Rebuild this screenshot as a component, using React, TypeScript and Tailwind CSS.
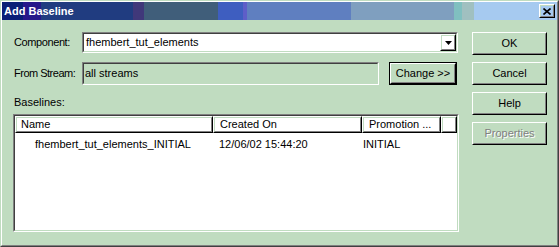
const FACE = "#c0dcc0";

// dithered caption gradient, as the 256-colour display draws it
const captionBands: [number, string][] = [
  [21, "#0b1f77"],
  [18, "#26188a"],
  [92, "#203c80"],
  [11, "#40387a"],
  [74, "#405e7a"],
  [25, "#3e5ec0"],
  [4, "#5e5ec8"],
  [104, "#5f7fc0"],
  [103, "#7f9fbf"],
  [8, "#80c0c0"],
  [12, "#a0c0c0"],
];

function Raised({
  className = "",
  inner = "",
  children,
}: {
  className?: string;
  inner?: string;
  children?: React.ReactNode;
}) {
  return (
    <div className={`border border-t-white border-l-white border-r-black border-b-black ${className}`}>
      <div
        className={`flex h-full w-full items-center justify-center border border-t-[#c0dcc0] border-l-[#c0dcc0] border-r-[#808080] border-b-[#808080] ${inner}`}
      >
        {children}
      </div>
    </div>
  );
}

function Sunken({
  className = "",
  inner = "",
  children,
}: {
  className?: string;
  inner?: string;
  children?: React.ReactNode;
}) {
  return (
    <div className={`border border-t-[#808080] border-l-[#808080] border-r-white border-b-white ${className}`}>
      <div
        className={`flex h-full w-full border border-t-[#404040] border-l-[#404040] border-r-[#c0dcc0] border-b-[#c0dcc0] ${inner}`}
      >
        {children}
      </div>
    </div>
  );
}

function TitleBar() {
  return (
    <div className="relative h-[18px] shrink-0">
      <div className="absolute inset-0 flex">
        {captionBands.map(([w, c], i) => (
          <div key={i} className="h-full shrink-0" style={{ width: w, background: c }} />
        ))}
        <div className="h-full flex-1 bg-[#a6caf0]" />
      </div>
      <div className="relative flex h-full items-center justify-between pl-[2px] pr-[2px]">
        <span className="text-[11px] font-bold text-white">Add Baseline</span>
        <Raised className="h-[14px] w-[16px]">
          <svg width="8" height="7" viewBox="0 0 8 7">
            <path d="M0.5 0.5 L7.5 6.5 M7.5 0.5 L0.5 6.5" stroke="#000" strokeWidth="1.6" />
          </svg>
        </Raised>
      </div>
    </div>
  );
}

function HeaderCell({ label, pad }: { label: string; pad: string }) {
  return (
    <Raised className="h-[17px] shrink-0" inner={`justify-start ${pad}`}>
      <span className="whitespace-nowrap leading-none">{label}</span>
    </Raised>
  );
}

export default function App() {
  const cols = [198, 149, 79];
  return (
    <div
      className="h-[247px] w-[559px] text-[11px] text-black"
      style={{ fontFamily: "'Liberation Sans', Arial, sans-serif" }}
    >
      <div className="h-full border border-t-[#c0dcc0] border-l-[#c0dcc0] border-r-[#404040] border-b-[#404040]">
        <div className="flex h-full flex-col border border-t-white border-l-white border-r-[#808080] border-b-[#808080] bg-[#c0dcc0]">
          <TitleBar />
          <div className="flex flex-1 pl-[11px] pt-[12px]">
            {/* left side */}
            <div className="flex w-[446px] flex-col">
              <div className="flex h-[21px] items-center">
                <span className="w-[69px] shrink-0 whitespace-nowrap pl-[1px] tracking-[-0.4px]">Component:</span>
                <Sunken className="h-[21px] w-[376px]" inner="bg-white items-center">
                  <span className="flex-1 pl-[2px]">fhembert_tut_elements</span>
                  <Raised className="h-[17px] w-[16px]">
                    <svg width="7" height="4" viewBox="0 0 7 4">
                      <path d="M0 0 H7 L3.5 4 Z" fill="#000" />
                    </svg>
                  </Raised>
                </Sunken>
              </div>
              <div className="mt-[9px] flex h-[23px] items-center">
                <span className="w-[69px] shrink-0 whitespace-nowrap pl-[1px] tracking-[-0.5px]">From Stream:</span>
                <Sunken className="h-[23px] w-[297px]" inner="items-center">
                  <span className="pl-[1px]">all streams</span>
                </Sunken>
                <div className="ml-[10px] h-[23px] w-[68px] border border-black">
                  <Raised className="h-full w-full">Change &gt;&gt;</Raised>
                </div>
              </div>
              <div className="mt-[10px] h-[14px] pl-[1px] leading-[14px]">Baselines:</div>
              <Sunken className="mt-[5px] h-[118px] w-[446px]" inner="flex-col bg-white">
                <div className="flex">
                  <div style={{ width: cols[0] }} className="shrink-0">
                    <HeaderCell label="Name" pad="pl-[4px]" />
                  </div>
                  <div style={{ width: cols[1] }} className="shrink-0">
                    <HeaderCell label="Created On" pad="pl-[5px]" />
                  </div>
                  <div style={{ width: cols[2] }} className="shrink-0">
                    <HeaderCell label="Promotion ..." pad="pl-[5px]" />
                  </div>
                  <Raised className="h-[17px] flex-1" />
                </div>
                <div className="mt-[3px] flex h-[16px] items-center whitespace-nowrap">
                  <span style={{ width: cols[0] }} className="shrink-0 pl-[20px]">
                    fhembert_tut_elements_INITIAL
                  </span>
                  <span style={{ width: cols[1] }} className="shrink-0 pl-[6px]">
                    12/06/02 15:44:20
                  </span>
                  <span className="pl-[1px]">INITIAL</span>
                </div>
              </Sunken>
            </div>
            {/* right side */}
            <div className="ml-[13px] flex flex-col gap-[7px]">
              <Raised className="h-[23px] w-[75px]">OK</Raised>
              <Raised className="h-[23px] w-[75px]">Cancel</Raised>
              <Raised className="h-[23px] w-[75px]">Help</Raised>
              <Raised className="h-[23px] w-[75px]">
                <span className="text-[#808080] [text-shadow:1px_1px_0_#fff]">Properties</span>
              </Raised>
            </div>
          </div>
        </div>
      </div>
    </div>
  );
}
